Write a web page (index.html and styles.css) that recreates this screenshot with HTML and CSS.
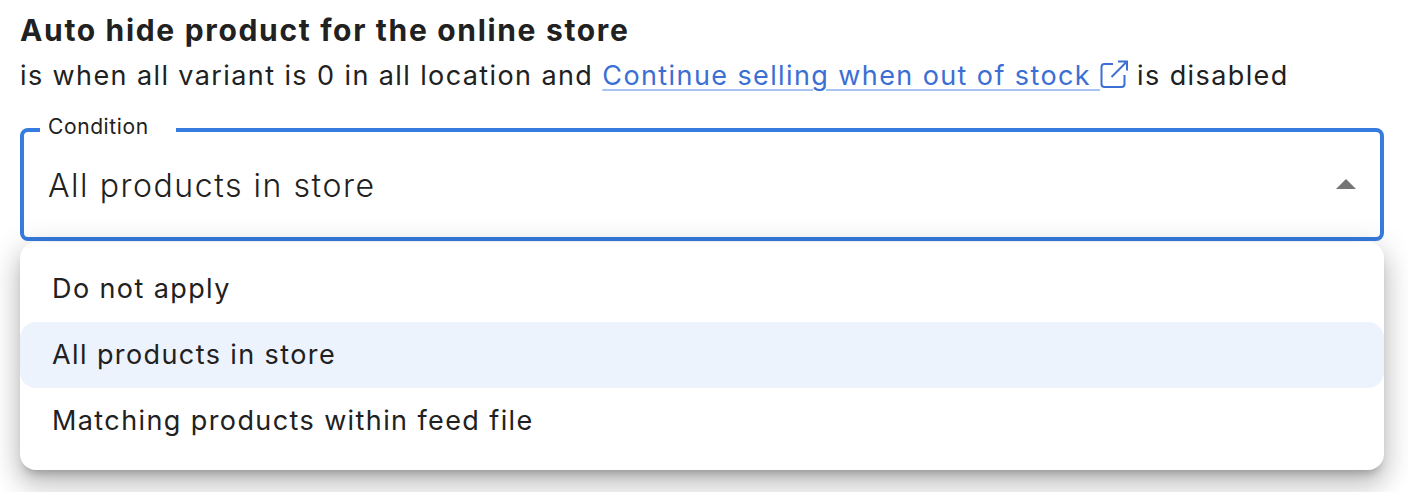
FILE: index.html
```html
<!DOCTYPE html>
<html lang="en">
<head>
    <meta charset="UTF-8">
    <title>Auto hide product</title>
    <link rel="stylesheet" href="styles.css">
</head>
<body>
    <h1 class="title">Auto hide product for the online store</h1>
    <p class="desc">is when all variant is 0 in all location and <a class="link" href="#">Continue selling when out of stock <svg class="ext-icon" viewBox="0 0 28 28" fill="none" stroke="currentColor" stroke-width="2"><path d="M13 4H4.500A3 3 0 0 0 1.500 7v17A3 3 0 0 0 4.500 27h17a3 3 0 0 0 3-3V15"/><path d="M18 1.500h9v9M27 1.500 11.500 17"/></svg></a> is disabled</p>

    <fieldset class="select">
        <legend class="select-label">Condition</legend>
        <span class="select-value">All products in store</span>
        <span class="select-arrow"></span>
    </fieldset>

    <ul class="menu">
        <li class="menu-item">Do not apply</li>
        <li class="menu-item selected">All products in store</li>
        <li class="menu-item">Matching products within feed file</li>
    </ul>
</body>
</html>
```

FILE: styles.css
```css
html, body {
    height: 100%;
}
body {
    margin: 0;
    padding: 12px 24px 0 20px;
    background: #fff;
    color: #212121;
    font-family: Inter, "Noto Sans", sans-serif;
    overflow: hidden;
    box-sizing: border-box;
}
.title {
    margin: 0;
    font-size: 30px;
    line-height: 36px;
    font-weight: 700;
    letter-spacing: 1.67px;
}
.desc {
    margin: 10px 0 0;
    font-size: 27px;
    line-height: 36px;
    letter-spacing: 1.4px;
}
.link {
    color: #3b6fd4;
    text-decoration: underline;
    text-decoration-color: #a8c4f0;
    text-decoration-thickness: 2px;
    text-underline-offset: 4px;
}
.ext-icon {
    width: 28px;
    height: 28px;
    vertical-align: -3px;
}
.select {
    display: flex;
    align-items: center;
    justify-content: space-between;
    height: 121px;
    margin: 26px 0 0;
    padding: 0 24px 0 24px;
    border: 4px solid #367bdf;
    border-radius: 8px;
    box-sizing: border-box;
    min-width: 0;
}
.select-label {
    margin-left: -8px;
    padding: 0 8px 6px;
    width: 136px;
    box-sizing: border-box;
    font-size: 21px;
    line-height: 14px;
    letter-spacing: 0.6px;
}
.select-value {
    font-size: 32px;
    line-height: 40px;
    letter-spacing: 1.55px;
    font-weight: 300;
    margin-bottom: 6px;
}
.select-arrow {
    width: 0;
    height: 0;
    margin-bottom: 10px;
    border-left: 10px solid transparent;
    border-right: 10px solid transparent;
    border-bottom: 10px solid #757575;
}
.menu {
    list-style: none;
    margin: 1px 0 0;
    padding: 14px 0 16px;
    background: #fff;
    border-radius: 16px;
    box-shadow: 0 8px 10px -5px rgba(0,0,0,0.25), 0 16px 24px 2px rgba(0,0,0,0.14), 0 6px 30px 5px rgba(0,0,0,0.12);
}
.menu-item {
    height: 66px;
    padding: 0 32px 2px 32px;
    box-sizing: border-box;
    display: flex;
    align-items: center;
    font-size: 27px;
    letter-spacing: 1.4px;
}
.menu-item.selected {
    background: #edf3fc;
    border-radius: 16px;
}
```
